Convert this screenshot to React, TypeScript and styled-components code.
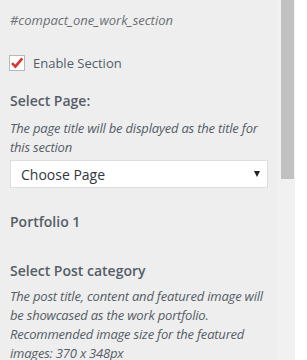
import React from 'react';
import styled, { createGlobalStyle } from 'styled-components';

const GlobalStyle = createGlobalStyle`
  html, body {
    margin: 0;
    padding: 0;
    background: #ffffff;
  }
  * {
    box-sizing: border-box;
  }
`;

const Screen = styled.div`
  display: flex;
  width: 307px;
  height: 360px;
  overflow: hidden;
  font-family: "Open Sans", "Noto Sans", sans-serif;
`;

const Panel = styled.div`
  width: 278px;
  flex: none;
  background: #eeeeee;
  padding: 11px 10px 0 10px;
  color: #555d66;
`;

const Track = styled.div`
  width: 17px;
  flex: none;
  background: #f1f1f1;
  padding: 0 1px 0 3px;
`;

const Thumb = styled.div`
  height: 179px;
  background: #c1c1c1;
`;

const SectionId = styled.div`
  font-size: 13px;
  font-style: italic;
  line-height: 18px;
  color: #6b7075;
`;

const CheckRow = styled.label`
  display: flex;
  align-items: center;
  gap: 8px;
  margin-top: 26px;
  height: 16px;
  font-size: 13px;
  color: #555d66;
`;

const Box = styled.span`
  width: 16px;
  height: 16px;
  flex: none;
  display: flex;
  align-items: center;
  justify-content: center;
  border: 1px solid #b4b9be;
  background: #ffffff;
  margin-left: -1px;
`;

const Title = styled.div<{ $gap: number }>`
  margin-top: ${({ $gap }) => $gap}px;
  font-size: 14px;
  font-weight: 600;
  line-height: 20px;
  color: #555d66;
`;

const Description = styled.div<{ $gap: number }>`
  margin-top: ${({ $gap }) => $gap}px;
  font-size: 13px;
  font-style: italic;
  line-height: 19px;
  letter-spacing: -0.2px;
  color: #555d66;
`;

const SelectWrap = styled.div`
  position: relative;
  margin-top: 3px;
  width: 258px;
  height: 28px;
`;

const Select = styled.select`
  appearance: none;
  -webkit-appearance: none;
  width: 100%;
  height: 100%;
  border: 1px solid #dddddd;
  border-radius: 0;
  background: #ffffff;
  padding: 0 24px 0 10px;
  font-family: "Open Sans", "Noto Sans", sans-serif;
  font-size: 14px;
  color: #32373c;
  outline: none;
`;

const Arrow = styled.span`
  position: absolute;
  right: 8px;
  top: 11px;
  width: 0;
  height: 0;
  border-left: 3.5px solid transparent;
  border-right: 3.5px solid transparent;
  border-top: 6px solid #222222;
  pointer-events: none;
`;

const Check = () => (
  <svg width="14" height="14" viewBox="0 0 14 14">
    <path d="M2 7.2 L5.4 10.6 L12.2 2.4" fill="none" stroke="#dc3232" strokeWidth="2.6" strokeLinejoin="miter" />
  </svg>
);

export default function App() {
  return (
    <>
      <GlobalStyle />
      <Screen>
        <Panel>
          <SectionId>#compact_one_work_section</SectionId>
          <CheckRow>
            <Box>
              <Check />
            </Box>
            Enable Section
          </CheckRow>
          <Title $gap={20}>Select Page:</Title>
          <Description $gap={8}>The page title will be displayed as the title for this section</Description>
          <SelectWrap>
            <Select defaultValue="">
              <option value="">Choose Page</option>
            </Select>
            <Arrow />
          </SelectWrap>
          <Title $gap={24}>Portfolio 1</Title>
          <Title $gap={29}>Select Post category</Title>
          <Description $gap={6}>
            The post title, content and featured image will be showcased as the work portfolio. Recommended image size for the featured images: 370 x 348px
          </Description>
        </Panel>
        <Track>
          <Thumb />
        </Track>
      </Screen>
    </>
  );
}
